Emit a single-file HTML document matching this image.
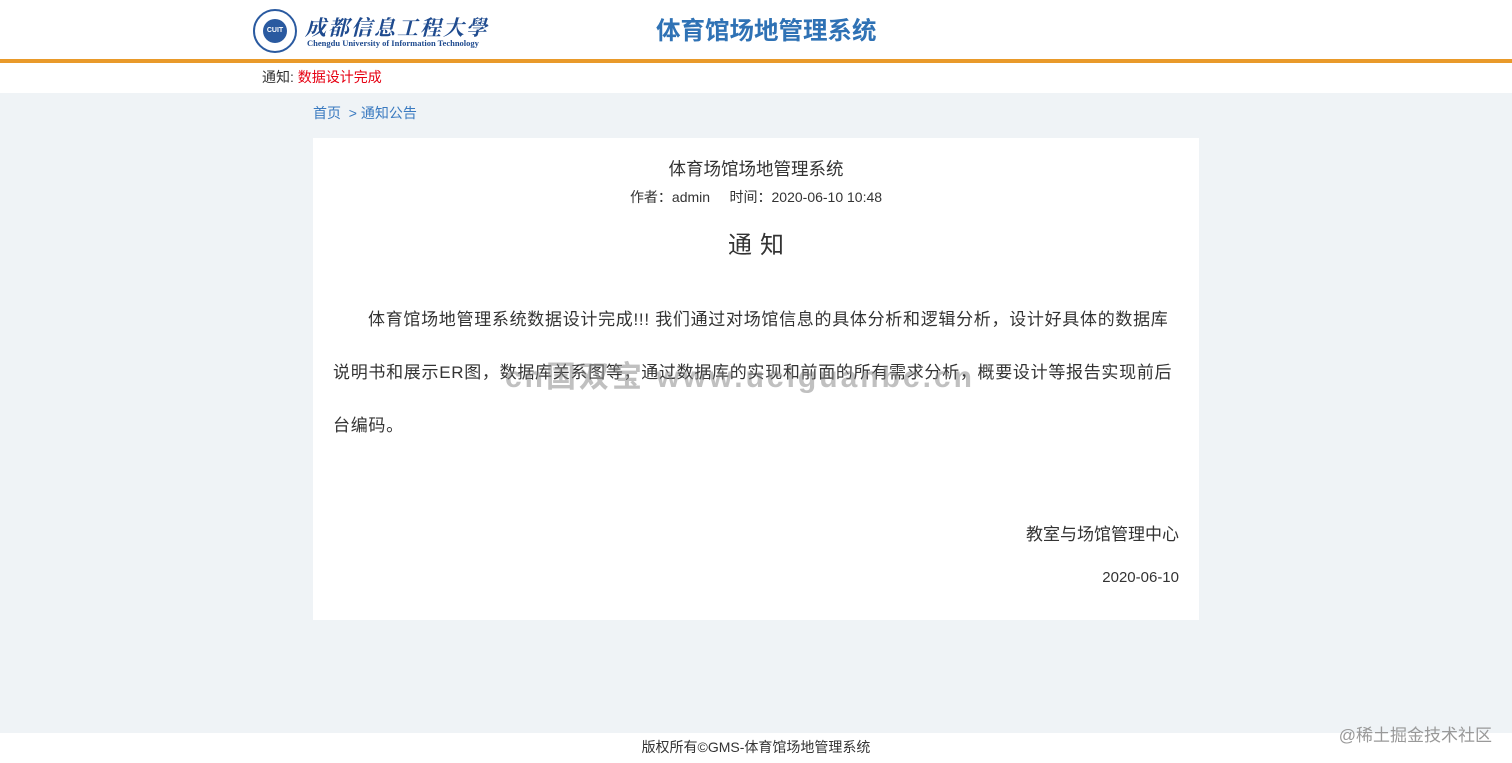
<!DOCTYPE html>
<html><head><meta charset="utf-8"><style>
*{margin:0;padding:0;box-sizing:border-box}
body{width:1512px;height:763px;overflow:hidden;background:#eff3f6;font-family:"Liberation Sans","Noto Sans CJK SC",sans-serif;color:#333;position:relative}
.hdr{position:absolute;left:0;top:0;width:1512px;height:59px;background:#fff}
.org{position:absolute;left:0;top:59px;width:1512px;height:4px;background:#e99a2a}
.ntc{position:absolute;left:0;top:63px;width:1512px;height:30px;background:#fff;font-size:14px;line-height:29px;padding-left:262px}
.ntc span{color:#e60012}
.logo{position:absolute;left:253px;top:9px;width:44px;height:44px;border-radius:50%;border:2px solid #2a5aa0;background:#fff}
.logo i{position:absolute;left:8px;top:8px;width:24px;height:24px;border-radius:50%;background:#2a5aa0;color:#fff;font-size:7px;font-style:normal;font-weight:bold;text-align:center;line-height:24px}
.cn{position:absolute;left:305px;top:12px;font-family:"Noto Serif CJK SC",serif;font-size:21px;color:#1f4b8f;font-weight:bold;letter-spacing:2px;font-style:italic}
.en{position:absolute;left:307px;top:38px;font-family:"Liberation Serif",serif;font-size:8.5px;color:#1f4b8f;font-weight:bold}
.ttl{position:absolute;left:656px;top:12px;font-size:24.5px;font-weight:bold;color:#2f72b5}
.bc{position:absolute;left:313px;top:103px;font-size:14px;color:#3a7ac0}
.card{position:absolute;left:313px;top:138px;width:886px;height:482px;background:#fff}
.h1{position:absolute;top:156px;left:313px;width:886px;text-align:center;font-size:17.5px}
.meta{position:absolute;top:187px;left:313px;width:886px;text-align:center;font-size:14px}
.tz{position:absolute;top:225px;left:313px;width:886px;text-align:center;font-size:24px;letter-spacing:8px;padding-left:8px}
.body{position:absolute;left:333px;top:293px;width:900px;font-size:17px;line-height:53px;white-space:nowrap;letter-spacing:0.7px}
.wm{position:absolute;left:505px;top:352px;font-size:30px;font-weight:bold;color:rgba(130,130,130,.5);letter-spacing:3px;white-space:nowrap}
.sig{position:absolute;right:333px;top:520px;font-size:17px}
.dt{position:absolute;right:333px;top:569px;font-size:15px}
.ft{position:absolute;left:0;top:733px;width:1512px;height:30px;background:#fff;text-align:center;font-size:14px;line-height:29px}
.jj{position:absolute;right:20px;top:721px;font-size:17px;color:#999}
</style></head><body>
<div class="hdr"></div>
<div class="logo"><i>CUIT</i></div>
<div class="cn">成都信息工程大學</div>
<div class="en">Chengdu University of Information Technology</div>
<div class="ttl">体育馆场地管理系统</div>
<div class="org"></div>
<div class="ntc">通知: <span>数据设计完成</span></div>
<div class="bc">首页 &nbsp;&gt; 通知公告</div>
<div class="card"></div>
<div class="h1">体育场馆场地管理系统</div>
<div class="meta">作者：admin &nbsp;&nbsp;&nbsp; 时间：2020-06-10 10:48</div>
<div class="tz">通知</div>
<div class="body"><span style="padding-left:35px"></span>体育馆场地管理系统数据设计完成!!! 我们通过对场馆信息的具体分析和逻辑分析，设计好具体的数据库<br>说明书和展示ER图，数据库关系图等，通过数据库的实现和前面的所有需求分析，概要设计等报告实现前后<br>台编码。</div>
<div class="wm">cn国双宝 www.uciguanbc.cn</div>
<div class="sig">教室与场馆管理中心</div>
<div class="dt">2020-06-10</div>
<div class="ft">版权所有©GMS-体育馆场地管理系统</div>
<div class="jj">@稀土掘金技术社区</div>
</body></html>
